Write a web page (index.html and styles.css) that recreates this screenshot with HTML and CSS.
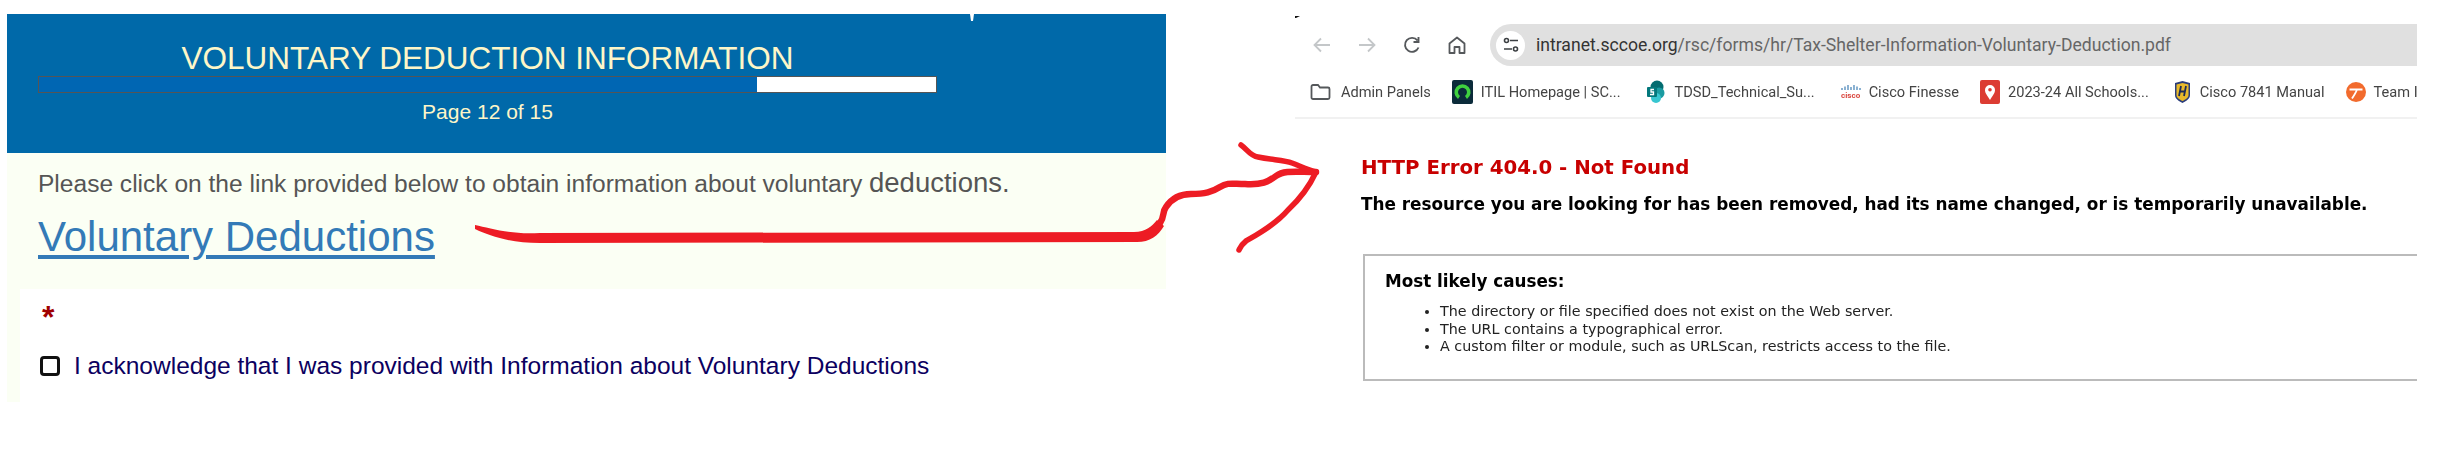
FILE: index.html
```html
<!DOCTYPE html>
<html>
<head>
    <link rel="stylesheet" href="styles.css">
</head>
<body>
    <div class="form-shot">
        <div class="form-header">
            <div class="form-title">VOLUNTARY DEDUCTION INFORMATION</div>
            <div class="progress">
                <div class="progress-fill" style="width: 80%;"></div>
            </div>
            <div class="page-count">Page 12 of 15</div>
        </div>
        <div class="form-body">
            <p class="intro">Please click on the link provided below to obtain information about voluntary <span class="intro-big">deductions.</span></p>
            <a class="doc-link" href="#">Voluntary Deductions</a>
            <div class="question">
                <div class="required">*</div>
                <label class="ack">
                    <input class="ack-box" type="checkbox">
                    I acknowledge that I was provided with Information about Voluntary Deductions
                </label>
            </div>
        </div>
    </div>

    <div class="browser-shot">
        <div class="toolbar">
            <svg class="nav-icon" width="20" height="20" viewBox="0 0 20 20"><path d="M18 10H3M9 3.500 2.500 10 9 16.500" fill="none" stroke="#c4c7c9" stroke-width="1.800"/></svg>
            <svg class="nav-icon" width="20" height="20" viewBox="0 0 20 20"><path d="M2 10h15M11 3.500l6.500 6.500-6.500 6.500" fill="none" stroke="#c4c7c9" stroke-width="1.800"/></svg>
            <svg class="nav-icon" width="20" height="20" viewBox="0 0 20 20"><path d="M16.500 12.500A7 7 0 1 1 15.500 5.500M16.500 2v5h-5" fill="none" stroke="#55585b" stroke-width="1.900"/></svg>
            <svg class="nav-icon" width="20" height="20" viewBox="0 0 20 20"><path d="M2.500 8.500 10 2.500l7.500 6V18H12.500v-6h-5v6H2.500z" fill="none" stroke="#55585b" stroke-width="1.800" stroke-linejoin="round"/></svg>
            <div class="url-bar">
                <span class="url-tune">
                    <svg width="16" height="16" viewBox="0 0 16 16"><g fill="none" stroke="#3c4043" stroke-width="1.600"><circle cx="3.500" cy="3.500" r="2"/><path d="M7 3.500h8M1 12h8"/><circle cx="12.500" cy="12" r="2"/></g></svg>
                </span>
                <span class="url-host">intranet.sccoe.org</span><span class="url-path">/rsc/forms/hr/Tax-Shelter-Information-Voluntary-Deduction.pdf</span>
            </div>
        </div>
        <div class="bookmarks">
            <div class="bookmark mark-admin">
                <svg width="21" height="18" viewBox="0 0 21 18"><path d="M1.500 3.500a1.500 1.500 0 0 1 1.500-1.500h5l2 2.500h8a1.500 1.500 0 0 1 1.500 1.500v8.500a1.500 1.500 0 0 1-1.500 1.500H3a1.500 1.500 0 0 1-1.500-1.500z" fill="none" stroke="#55585b" stroke-width="1.800"/></svg>
                <span>Admin Panels</span>
            </div>
            <div class="bookmark mark-itil">
                <svg width="21" height="24" viewBox="0 0 21 24"><rect width="21" height="24" rx="2" fill="#0b2b3a"/><path d="M7 17.500a6.300 6.300 0 1 1 7 0" fill="none" stroke="#3fd13f" stroke-width="3.600"/></svg>
                <span>ITIL Homepage | SC...</span>
            </div>
            <div class="bookmark mark-tdsd">
                <svg width="18" height="24" viewBox="0 0 18 24"><circle cx="10" cy="7" r="6.500" fill="#036c70"/><circle cx="12" cy="13" r="5.500" fill="#1a9ba1"/><circle cx="9" cy="18" r="5" fill="#37c6d0"/><rect y="7" width="10" height="10" rx="1" fill="#03787c"/><path d="M7 9.500H4v2.500h2.500v2.500H3" fill="none" stroke="#fff" stroke-width="1.300"/></svg>
                <span>TDSD_Technical_Su...</span>
            </div>
            <div class="bookmark mark-cisco">
                <span class="cisco-logo">
                    <svg width="20" height="8" viewBox="0 0 20 8"><path d="M1 4v2M4 2.500v3.500M7 1v5M10 3v3M13 1v5M16 2.500v3.500M19 4v2" stroke="#3f7fb5" stroke-width="1.200"/></svg>
                    <span class="cisco-word">cisco</span>
                </span>
                <span>Cisco Finesse</span>
            </div>
            <div class="bookmark mark-map">
                <svg width="20" height="24" viewBox="0 0 20 24"><rect width="20" height="24" rx="2" fill="#dc3c33"/><path d="M10 20c-3-5-5-7-5-10a5 5 0 0 1 10 0c0 3-2 5-5 10z" fill="#fff"/><circle cx="10" cy="9.800" r="1.800" fill="#dc3c33"/></svg>
                <span>2023-24 All Schools...</span>
            </div>
            <div class="bookmark mark-manual">
                <svg width="15" height="22" viewBox="0 0 15 22"><path d="M0 2 7.500 0 15 2v12c0 4-4 6-7.500 8C4 20 0 18 0 14z" fill="#2b3d7a"/><path d="M1.500 3.500 7.500 2l6 1.500V14c0 3-3 4.500-6 6-3-1.500-6-3-6-6z" fill="#e8b92a"/><path d="M6 5 4 15M11 5 9 15M4.500 10.500h6" stroke="#1c2a55" stroke-width="1.800"/></svg>
                <span>Cisco 7841 Manual</span>
            </div>
            <div class="bookmark mark-team">
                <svg width="20" height="20" viewBox="0 0 20 20"><circle cx="10" cy="10" r="10" fill="#f26b2d"/><path d="M3.500 7.500h13M11 7.500c-1 3-3 6-5 9" fill="none" stroke="#fff" stroke-width="1.800"/></svg>
                <span>Team I</span>
            </div>
        </div>
        <div class="error-page">
            <h1 class="error-title">HTTP Error 404.0 - Not Found</h1>
            <h2 class="error-msg">The resource you are looking for has been removed, had its name changed, or is temporarily unavailable.</h2>
            <div class="causes">
                <h3 class="causes-title">Most likely causes:</h3>
                <ul class="causes-list">
                    <li>The directory or file specified does not exist on the Web server.</li>
                    <li>The URL contains a typographical error.</li>
                    <li>A custom filter or module, such as URLScan, restricts access to the file.</li>
                </ul>
            </div>
        </div>
    </div>

    <!-- hand drawn arrow and stray marks on top of the two screenshots -->
    <svg class="scribble" width="2446" height="451" viewBox="0 0 2446 451">
        <path d="M475 225C490 228 510 235 540 233L1134 232C1146 232 1152 226 1157 220L1164 226C1158 236 1150 242 1137 242L540 243C510 243 490 236 475 229Z" fill="#ed1c24"/>
        <path d="M1160 223C1165 216 1162 212 1166 207C1172 198 1180 194 1191 194C1205 194 1212 192 1220 187C1228 182 1232 184 1245 184C1262 185 1268 182 1276 176C1284 170 1296 172 1316 172" fill="none" stroke="#ed1c24" stroke-width="6.500" stroke-linecap="round"/>
        <path d="M1241 145C1248 150 1250 156 1258 157C1272 160 1284 160 1292 163C1300 166 1308 170 1316 172C1310 185 1302 197 1288 210C1276 224 1258 234 1246 241C1241 245 1240 248 1239 250" fill="none" stroke="#ed1c24" stroke-width="5.500" stroke-linecap="round" stroke-linejoin="round"/>
        <path d="M970 14h4l-1 7h-2z" fill="#fff"/>
        <path d="M1295 16h5l-4 2h-1z" fill="#111"/>
    </svg>
</body>
</html>
```

FILE: styles.css
```css
body {
    margin: 0;
    background: #fff;
    display: flex;
    align-items: flex-start;
    width: 2446px;
    height: 451px;
    overflow: hidden;
    font-family: 'Liberation Sans', sans-serif;
}

/* left screenshot */
.form-shot {
    width: 1159px;
    margin: 14px 0 0 7px;
    flex-shrink: 0;
}

.form-header {
    height: 139px;
    box-sizing: border-box;
    padding: 27px 229px 0 31px;
    background: #0069a9;
    color: #fdf6c8;
    text-align: center;
}

.form-title {
    font-size: 31.500px;
    line-height: 35px;
}

.progress {
    height: 15px;
    border: 1px solid #555;
    background: #fff;
}

.progress-fill {
    height: 100%;
    background: #0066b3;
}

.page-count {
    margin-top: 7px;
    font-size: 21px;
    line-height: 24px;
}

.form-body {
    height: 249px;
    box-sizing: border-box;
    padding-top: 15px;
    background: #fbfff4;
}

.intro {
    margin: 0 0 0 31px;
    color: #555;
    font-size: 24.560px;
    line-height: 30px;
}

.intro-big {
    font-size: 27.500px;
}

.doc-link {
    display: inline-block;
    margin: 13px 0 0 31px;
    color: #337ab7;
    font-size: 42px;
    line-height: 50px;
    text-decoration-thickness: 4px;
    text-underline-offset: 4px;
}

.question {
    height: 113px;
    box-sizing: border-box;
    margin: 27px 0 0 13px;
    padding: 8px 0 0 19px;
    background: #fff;
}

.required {
    height: 54px;
    padding-left: 3px;
    color: #a00000;
    font-size: 32px;
    font-weight: 700;
    line-height: 40px;
}

.ack {
    display: flex;
    align-items: center;
    gap: 14px;
    color: #0b0060;
    font-size: 24.500px;
    line-height: 30px;
}

.ack-box {
    appearance: none;
    width: 20px;
    height: 20px;
    box-sizing: border-box;
    margin: 0 0 0 1px;
    border: 3px solid #111;
    border-radius: 4px;
    background: #fff;
}

/* right screenshot */
.browser-shot {
    width: 1122px;
    margin-left: 129px;
    flex-shrink: 0;
    filter: blur(0.45px);
    font-family: Roboto, sans-serif;
}

.toolbar {
    display: flex;
    align-items: center;
    gap: 25px;
    height: 42px;
    margin-top: 24px;
    padding-left: 17px;
}

.url-bar {
    display: flex;
    align-items: center;
    flex: 1;
    height: 42px;
    margin-left: -2px;
    border-radius: 21px 0 0 21px;
    background: #e0e0e0;
    color: #666;
    font-size: 17.600px;
    white-space: nowrap;
    overflow: hidden;
}

.url-tune {
    display: flex;
    align-items: center;
    justify-content: center;
    width: 29px;
    height: 29px;
    margin: 0 11px 0 6px;
    border-radius: 50%;
    background: #fff;
}

.url-host {
    color: #333;
}

.bookmarks {
    display: flex;
    align-items: center;
    height: 51px;
    border-bottom: 2px solid #f1f1f1;
    padding-left: 15px;
    color: #444;
    font-size: 14.600px;
    white-space: nowrap;
    overflow: hidden;
}

.bookmark {
    display: flex;
    align-items: center;
    gap: 8px;
    flex-shrink: 0;
}

.mark-itil { margin-left: 21px; }
.mark-tdsd { margin-left: 26px; }
.mark-cisco { margin-left: 26px; }
.mark-map { margin-left: 21px; }
.mark-manual { margin-left: 26px; }
.mark-team { margin-left: 21px; }

.mark-admin,
.mark-tdsd,
.mark-manual {
    gap: 10px;
}

.cisco-logo {
    display: flex;
    flex-direction: column;
    align-items: center;
    width: 20px;
}

.cisco-word {
    color: #d9453d;
    font-size: 8px;
    font-weight: 700;
    line-height: 8px;
}

.error-page {
    padding: 37px 0 0 66px;
    color: #000;
    font-family: 'DejaVu Sans', sans-serif;
}

.error-title {
    margin: 0;
    color: #c80000;
    font-size: 19.800px;
    line-height: 24px;
}

.error-msg {
    margin: 13px 0 0;
    font-size: 16.850px;
    line-height: 22px;
    white-space: nowrap;
}

.causes {
    height: 127px;
    box-sizing: border-box;
    margin: 39px 0 0 2px;
    padding: 14px 0 0 20px;
    border: 2px solid #bbb;
    border-right: 0;
}

.causes-title {
    margin: 0;
    font-size: 16.800px;
    line-height: 22px;
}

.causes-list {
    margin: 11px 0 0;
    padding-left: 55px;
    color: #222;
    font-size: 14.300px;
    line-height: 17.500px;
}

.scribble {
    position: absolute;
    top: 0;
    left: 0;
}
```
